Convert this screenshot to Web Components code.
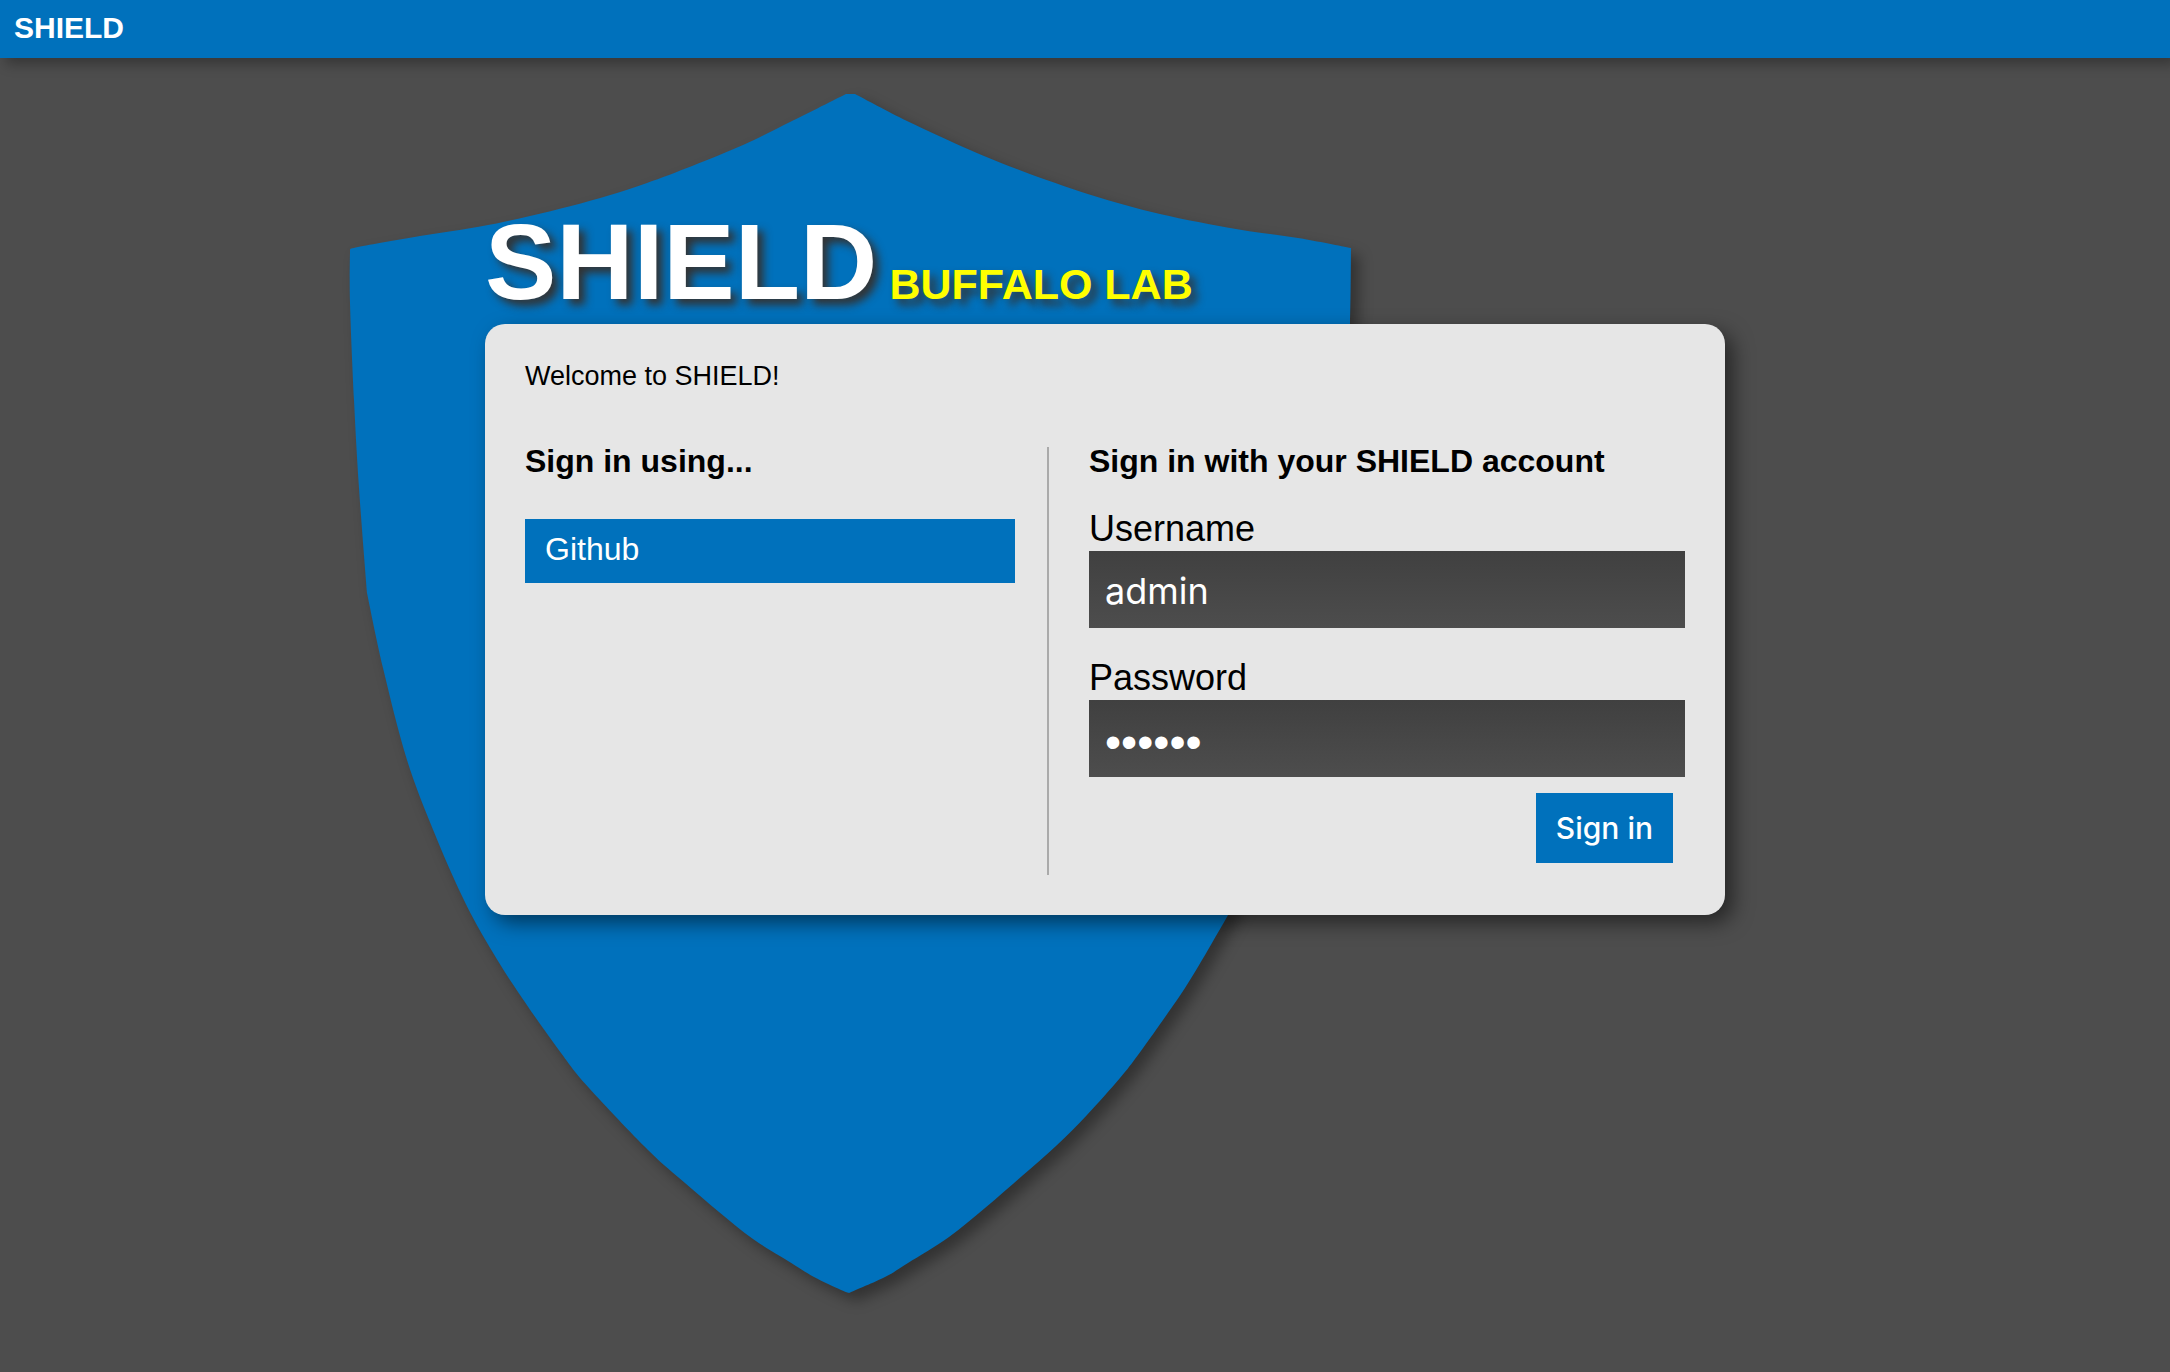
<!DOCTYPE html>
<html lang="en">
<head>
<meta charset="utf-8">
<title>SHIELD</title>
<style>
  html { min-height: 100%; background: #4d4d4d; }
  body {
    --blue: #0071bc;
    --dark: #4d4d4d;
    --panel: #e6e6e6;
    margin: 0;
    font-family: "Liberation Sans", Arial, sans-serif;
    color: #000;
  }
</style>
</head>
<body>
<top-bar>SHIELD</top-bar>
<login-hero>
  <shield-logo slot="backdrop"></shield-logo>
  <brand-title slot="title">SHIELD<span slot="site">BUFFALO LAB</span></brand-title>
  <login-card>
    <span slot="motd">Welcome to SHIELD!</span>
    <provider-list slot="providers">
      <provider-link href="#github">Github</provider-link>
    </provider-list>
    <account-form slot="local"></account-form>
  </login-card>
</login-hero>

<script>
  const define = (name, html, setup) => {
    const template = document.createElement('template');
    template.innerHTML = html;
    customElements.define(name, class extends HTMLElement {
      constructor() {
        super();
        this.attachShadow({ mode: 'open' }).append(template.content.cloneNode(true));
      }
      connectedCallback() {
        if (setup) setup(this, this.shadowRoot);
      }
    });
  };

  define('top-bar', `
    <style>
      :host { display: block; }
      header {
        padding: 10px 14px 12px;
        background: var(--blue);
        color: #fff;
        font-size: 30px;
        font-weight: bold;
        line-height: 36px;
        box-shadow: 6px 6px 12px rgba(0, 0, 0, .3);
      }
    </style>
    <header><slot></slot></header>`);

  define('login-hero', `
    <style>
      :host { display: block; padding: 36px 16px; }
      main { display: grid; max-width: 1470px; margin: 0 auto; }
      .backdrop, .content { grid-area: 1 / 1; }
      .backdrop { justify-self: start; }
      .content { padding: 110px 95px 0 135px; z-index: 1; }
    </style>
    <main>
      <div class="backdrop"><slot name="backdrop"></slot></div>
      <div class="content"><slot name="title"></slot><slot></slot></div>
    </main>`);

  /* Each run is a smooth edge of the shield; edges meet at corners. */
  const EDGES = [
    [[505,0],[557,27],[620,56],[672,77],[741,101],[810,120],[886,135],[948,144],[1001,154]],
    [[1001,154],[1000,230],[996,330],[990,420],[984,495]],
    [[984,495],[967,574],[943,666],[917,738],[888,802],[862,849],[835,894],[813,926],[788,961],[770,984],[737,1021],[706,1052],[672,1082],[635,1114],[599,1143],[558,1169],[535,1183],[499,1199]],
    [[499,1199],[491,1196],[464,1183],[438,1167],[403,1145],[369,1118],[335,1089],[298,1056],[239,994],[211,959],[168,898],[136,847],[112,802],[84,738],[57,666],[33,574],[17,499]],
    [[17,499],[9,394],[4,306],[0,209],[0,156]],
    [[0,156],[8,153],[70,142],[138,131],[221,112],[297,89],[386,54],[440,28],[496,0]]
  ];

  /* Catmull-Rom through the points of a run, as cubic segments. */
  const smooth = points => points.slice(1).map((p2, i) => {
    const p1 = points[i], p0 = points[i - 1] || p1, p3 = points[i + 2] || p2;
    const a = [0, 1].map(k => p1[k] + (p2[k] - p0[k]) / 6);
    const b = [0, 1].map(k => p2[k] - (p3[k] - p1[k]) / 6);
    return `C${a} ${b} ${p2}`;
  }).join('');

  define('shield-logo', `
    <style>
      :host { display: block; }
      svg { display: block; width: 1001px; max-width: 100%; overflow: visible;
            filter: drop-shadow(8px 8px 7px rgba(0, 0, 0, .35)); }
      path { fill: var(--blue); }
    </style>
    <svg viewBox="0 0 1001 1199" aria-hidden="true"><path/></svg>`,
    (el, root) => root.querySelector('path')
      .setAttribute('d', 'M505,0' + EDGES.map(smooth).join('') + 'Z'));

  define('brand-title', `
    <style>
      :host { display: block; }
      h1 {
        display: flex; align-items: baseline; gap: 12px;
        margin: 0 0 4px;
        color: #fff;
        font-size: 107px;
        line-height: 116px;
        text-shadow: 6px 6px 8px #333;
      }
      small { font-size: 43px; line-height: 48px; color: #ff0; }
    </style>
    <h1><span><slot></slot></span><small><slot name="site"></slot></small></h1>`);

  define('login-card', `
    <style>
      :host { display: block; }
      section {
        padding: 40px;
        border-radius: 20px;
        background: var(--panel);
        box-shadow: 8px 8px 20px rgba(0, 0, 0, .5);
      }
      p { margin: 0 0 59px; font-size: 27px; line-height: 24px; }
      .columns { display: grid; grid-template-columns: 524fr 636fr; }
      .providers {
        padding-right: 32px;
        border-right: 2px solid #aaa;
      }
      .local { padding-left: 40px; }
    </style>
    <section>
      <p><slot name="motd"></slot></p>
      <div class="columns">
        <div class="providers"><slot name="providers"></slot></div>
        <div class="local"><slot name="local"></slot></div>
      </div>
    </section>`);

  define('provider-list', `
    <style>
      :host { display: block; }
      h2 { margin: 0 0 44px; font-size: 32px; line-height: 28px; }
    </style>
    <h2>Sign in using...</h2>
    <slot></slot>`);

  define('provider-link', `
    <style>
      :host { display: block; }
      a {
        display: block;
        padding: 12px 20px 16px;
        background: var(--blue);
        color: #fff;
        font-size: 32px;
        line-height: 36px;
        text-decoration: none;
      }
    </style>
    <a><slot></slot></a>`,
    (el, root) => { root.querySelector('a').href = el.getAttribute('href'); });

  define('account-form', `
    <style>
      :host { display: block; }
      form { display: flex; flex-direction: column; }
      h2 { margin: 0 0 32px; font-size: 32px; line-height: 28px; }
      label { font-size: 36px; line-height: 44px; }
      input {
        box-sizing: border-box;
        width: 100%;
        height: 77px;
        margin: 0 0 28px;
        padding: 2px 16px 0;
        border: 0;
        border-radius: 0;
        background: linear-gradient(#404040, var(--dark));
        color: #fff;
        font: 36px Inter, "Liberation Sans", sans-serif;
      }
      input[type="password"] {
        margin-bottom: 16px;
        padding-top: 6px;
        font: 46px "Liberation Sans", sans-serif;
      }
      button {
        align-self: flex-end;
        margin: 0 12px 12px 0;
        padding: 17px 20px;
        border: 0;
        background: var(--blue);
        color: #fff;
        font: 500 30px/36px Inter, "Liberation Sans", sans-serif;
      }
    </style>
    <form>
      <h2>Sign in with your SHIELD account</h2>
      <label for="username">Username</label>
      <input id="username" type="text" value="admin" autocomplete="username">
      <label for="password">Password</label>
      <input id="password" type="password" value="shield" autocomplete="current-password">
      <button type="button">Sign in</button>
    </form>`);
</script>
</body>
</html>
